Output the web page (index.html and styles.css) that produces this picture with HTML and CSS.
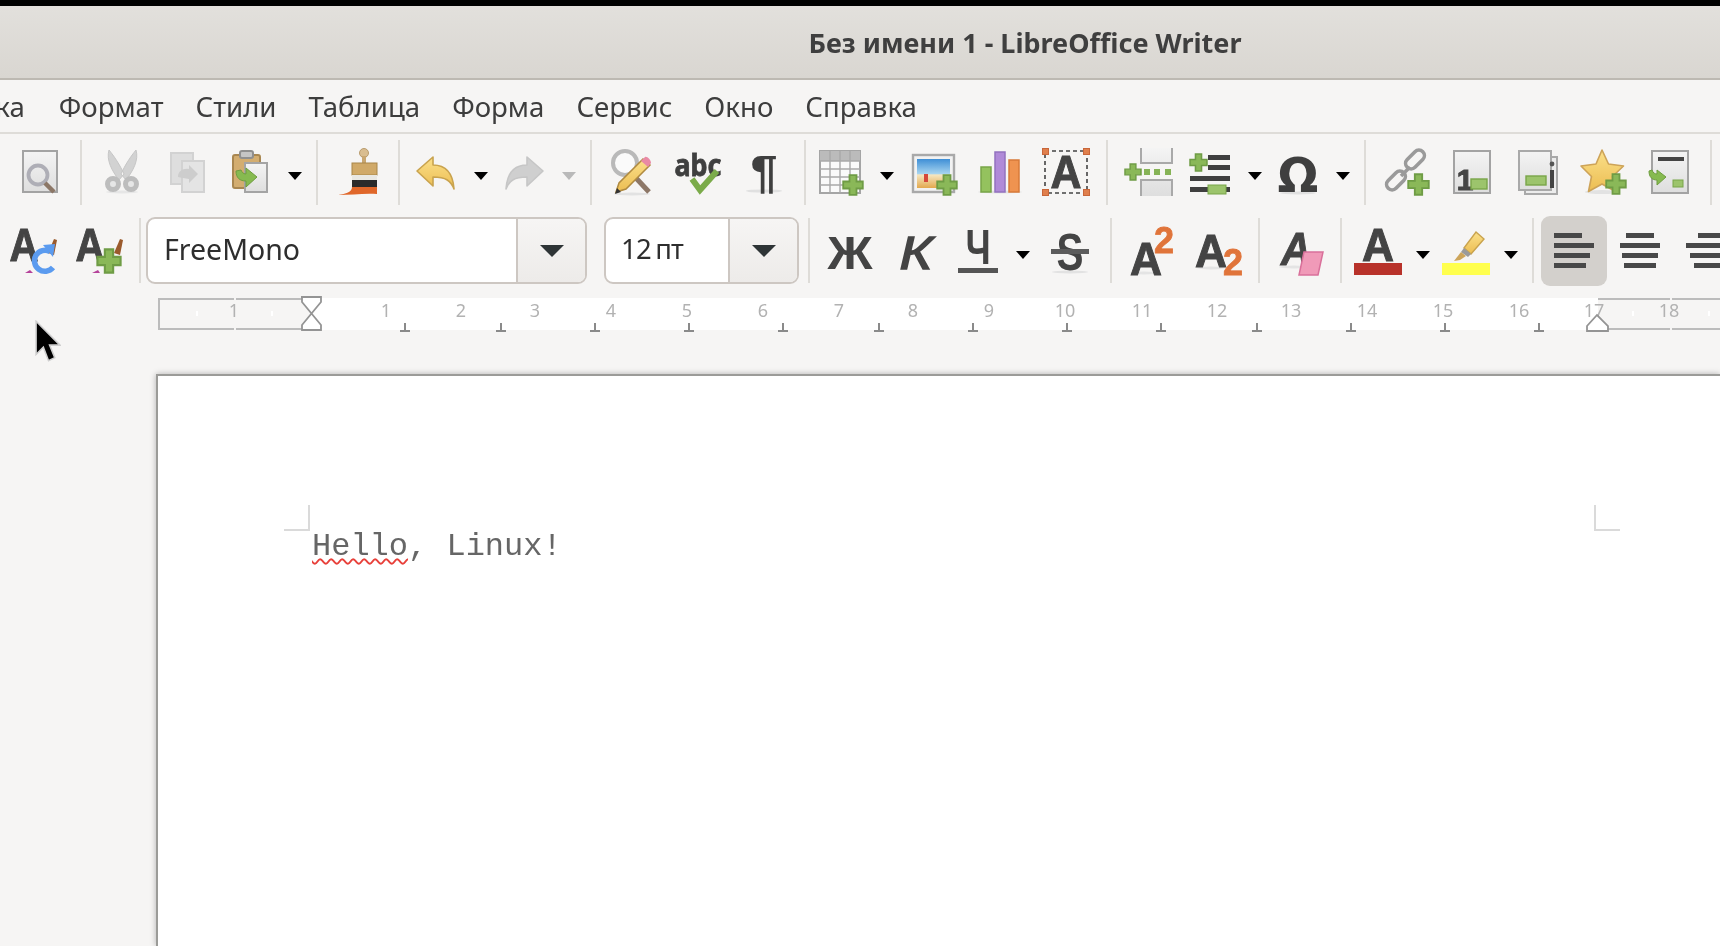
FILE: index.html
```html
<!DOCTYPE html>
<html lang="ru">
<head>
<meta charset="utf-8">
<title>Без имени 1 - LibreOffice Writer</title>
<link rel="stylesheet" href="styles.css">
</head>
<body>
<svg class="defs" width="0" height="0" aria-hidden="true">
  <defs>
    <linearGradient id="pg" x1="0" y1="0" x2="0" y2="1"><stop offset="0" stop-color="#f4f4f4"/><stop offset="1" stop-color="#dedede"/></linearGradient>
    <linearGradient id="yl" x1="0" y1="0" x2="0" y2="1"><stop offset="0" stop-color="#fbe08a"/><stop offset="1" stop-color="#ecbd52"/></linearGradient>
    <linearGradient id="sky" x1="0" y1="0" x2="0" y2="1"><stop offset="0" stop-color="#3f8fd6"/><stop offset=".5" stop-color="#a5d3ef"/><stop offset=".55" stop-color="#f5e6c0"/><stop offset="1" stop-color="#e3a94e"/></linearGradient>
    <symbol id="plus" viewBox="0 0 22 22"><path d="M7.5 1.2h7v6.3h6.3v7h-6.3v6.3h-7v-6.3H1.2v-7h6.3z" fill="#8ab858" stroke="#6f9c45" stroke-width="1.8"/></symbol>
  </defs>
</svg>
<div class="app">
  <div class="topline"></div>
  <header class="titlebar">Без имени 1 - LibreOffice Writer</header>
  <nav class="menubar">
    <span class="mi first">Вставка</span><span class="mi">Формат</span><span class="mi">Стили</span><span class="mi">Таблица</span><span class="mi">Форма</span><span class="mi">Сервис</span><span class="mi">Окно</span><span class="mi">Справка</span>
  </nav>

  <div class="toolbar row1">
    <div class="btn"><svg class="ic" viewBox="0 0 48 48"><rect x="7" y="3" width="34" height="41" fill="url(#pg)" stroke="#a3a3a3" stroke-width="2"/><circle cx="22" cy="27" r="9.500" fill="none" stroke="#aeaeb6" stroke-width="3.800"/><path d="M29 35l9 9" stroke="#8c7767" stroke-width="4.500"/></svg></div>
    <div class="sep"></div>
    <div class="btn"><svg class="ic" viewBox="0 0 48 48"><ellipse cx="24" cy="44" rx="16" ry="1.500" fill="#e6e6e6"/><path d="M11 2c-3 10 3 21 10 30l5-6C22 17 16 8 11 2zM38 2c3 10-3 21-10 30l-5-6c4-9 10-18 15-24z" fill="#d2d2d2" stroke="#c6c6c6"/><circle cx="15" cy="36" r="5.500" fill="#e6e6e6" stroke="#bdbdbd" stroke-width="5"/><circle cx="33" cy="36" r="5.500" fill="#e6e6e6" stroke="#bdbdbd" stroke-width="5"/></svg></div>
    <div class="btn"><svg class="ic" viewBox="0 0 48 48"><rect x="7" y="5" width="22" height="31" fill="#dedede" stroke="#d2d2d2" stroke-width="2"/><rect x="18" y="13" width="22" height="31" fill="#e4e4e4" stroke="#d2d2d2" stroke-width="2"/><path d="M14 29c0-6 5-9 11-8v-4l9 9-9 9v-4c-4-1-8-1-11-2z" fill="#cdcdcd"/></svg></div>
    <div class="btn has"><svg class="ic" viewBox="0 0 48 48"><rect x="7" y="7" width="27" height="33" rx="2" fill="#d3ad70" stroke="#a98751" stroke-width="2"/><rect x="14" y="3" width="13" height="7" rx="2" fill="#c5c5c5" stroke="#8f8f8f" stroke-width="2"/><rect x="19" y="15" width="22" height="29" fill="url(#pg)" stroke="#a4a4a4" stroke-width="2"/><path d="M10 23c0 7 4 10 10 10v6l11-10-11-9v6c-3 0-4-2-5-4z" fill="#86ba50" stroke="#6e9d3f"/></svg></div>
    <div class="arr"></div>
    <div class="sep"></div>
    <div class="btn"><svg class="ic" viewBox="0 0 48 48"><circle cx="30" cy="5" r="4.500" fill="#d9bd90" stroke="#b99c6e"/><rect x="28" y="8" width="4" height="8" fill="#c9a772"/><rect x="18" y="15" width="25" height="12" fill="#d0a968" stroke="#a88648"/><rect x="18" y="27" width="25" height="5" fill="#e9e8e3"/><rect x="18" y="32" width="25" height="8" fill="#2b2b2b"/><path d="M4 47c8-1 14-3 14-8h25v7c-12-1-26 1-39 1z" fill="#e0672a"/></svg></div>
    <div class="sep"></div>
    <div class="btn has"><svg class="ic" viewBox="0 0 48 48"><path d="M5 23L21 9v8c14 0 20 10 21 24-3-8-8-12-21-12v9z" fill="url(#yl)" stroke="#c9a34e" stroke-width="1.600" stroke-linejoin="round"/></svg></div>
    <div class="arr"></div>
    <div class="btn has"><svg class="ic" viewBox="0 0 48 48"><path d="M43 23L27 9v8C13 17 7 27 6 41c3-8 8-12 21-12v9z" fill="#cfcfcf" stroke="#c6c6c6" stroke-width="1.600" stroke-linejoin="round"/></svg></div>
    <div class="arr off"></div>
    <div class="sep"></div>
    <div class="btn"><svg class="ic" viewBox="0 0 48 48"><ellipse cx="24" cy="46" rx="18" ry="1.400" fill="#e2e2e2"/><circle cx="17" cy="15" r="12" fill="#fafafa" stroke="#b9b9b9" stroke-width="4"/><path d="M28 30l13 14" stroke="#8d7767" stroke-width="5"/><path d="M8 44l3-9 24-24 7 6-24 24z" fill="url(#yl)" stroke="#b08a40" stroke-width="1.500"/><path d="M33 13l4-4c2-1 6 3 6 6l-3 4z" fill="#e98aa5"/><path d="M7 46l2-6 4 4z" fill="#333"/></svg></div>
    <div class="btn"><svg class="ic" viewBox="0 0 48 48"><text x="24" y="28" class="t-abc" text-anchor="middle" textLength="47" lengthAdjust="spacingAndGlyphs">abc</text><path d="M18 31l8 11 17-19" fill="none" stroke="#7bab4a" stroke-width="6"/></svg></div>
    <div class="btn"><svg class="ic" viewBox="0 0 48 48"><ellipse cx="24" cy="43" rx="18" ry="1.600" fill="#e0e0e0"/><text x="24" y="40" class="t-pil" text-anchor="middle" textLength="27" lengthAdjust="spacingAndGlyphs">¶</text></svg></div>
    <div class="sep"></div>
    <div class="btn has"><svg class="ic" viewBox="0 0 48 48"><rect x="2" y="3" width="40" height="42" fill="#fafafa" stroke="#a5a5a5" stroke-width="2"/><rect x="2" y="3" width="40" height="10" fill="#bbb"/><path d="M12 3v42M22 3v42M32 3v42M2 13h40M2 21h40M2 29h40M2 37h40" stroke="#a9a9a9" stroke-width="1.400"/><use href="#plus" x="24" y="26" width="22" height="22"/></svg></div>
    <div class="arr"></div>
    <div class="btn"><svg class="ic" viewBox="0 0 48 48"><rect x="3" y="7" width="41" height="37" fill="#f2f2f2" stroke="#a9a9a9" stroke-width="2.400"/><rect x="7" y="11" width="33" height="29" fill="url(#sky)"/><rect x="14" y="26" width="4" height="8" fill="#d5483a"/><use href="#plus" x="26" y="26" width="22" height="22"/></svg></div>
    <div class="btn"><svg class="ic" viewBox="0 0 48 48"><ellipse cx="24" cy="44" rx="22" ry="1.500" fill="#e2e2e2"/><rect x="5" y="19" width="10" height="25" fill="#94c25e" stroke="#78a548" stroke-width="1.500"/><rect x="19" y="4" width="10" height="40" fill="#b08ad8" stroke="#9372bf" stroke-width="1.500"/><rect x="33" y="12" width="10" height="32" fill="#ef9350" stroke="#d87a38" stroke-width="1.500"/></svg></div>
    <div class="btn"><svg class="ic" viewBox="0 0 48 48"><rect x="3" y="3" width="42" height="42" fill="none" stroke="#444" stroke-width="1.600" stroke-dasharray="4 3"/><g fill="#e07f4c" stroke="#c8663a"><rect x="0.500" y="0.500" width="6" height="6"/><rect x="41.500" y="0.500" width="6" height="6"/><rect x="0.500" y="41.500" width="6" height="6"/><rect x="41.500" y="41.500" width="6" height="6"/></g><text x="24" y="40" class="t-a" text-anchor="middle" textLength="31" lengthAdjust="spacingAndGlyphs">A</text></svg></div>
    <div class="sep"></div>
    <div class="btn"><svg class="ic" viewBox="0 0 48 48"><path d="M17 0v15h31V0M17 48V32h31v16" fill="url(#pg)" stroke="#a9a9a9" stroke-width="2"/><path d="M20 24h6M30 24h6M41 24h6" stroke="#86b356" stroke-width="6"/><use href="#plus" x="0" y="15" width="18" height="18"/></svg></div>
    <div class="btn has"><svg class="ic" viewBox="0 0 48 48"><use href="#plus" x="3" y="5" width="19" height="19"/><g fill="#3f3f3f"><rect x="22" y="7" width="22" height="5"/><rect x="22" y="17" width="22" height="5"/><rect x="4" y="28" width="40" height="5"/><rect x="4" y="39" width="40" height="5"/></g><rect x="22" y="37" width="18" height="9" fill="#9cc46c" stroke="#79a549"/></svg></div>
    <div class="arr"></div>
    <div class="btn has"><svg class="ic" viewBox="0 0 48 48"><ellipse cx="24" cy="45" rx="18" ry="1.500" fill="#e0e0e0"/><text x="24" y="44" class="t-om" text-anchor="middle">Ω</text></svg></div>
    <div class="arr"></div>
    <div class="sep"></div>
    <div class="btn"><svg class="ic" viewBox="0 0 48 48"><g fill="none" stroke="#9a9a9a" stroke-width="3.600"><rect x="22" y="6" width="22" height="11" rx="5.500" transform="rotate(-45 33 11.500)"/><rect x="3" y="27" width="22" height="11" rx="5.500" transform="rotate(-45 14 32.500)"/><path d="M19 28l9-9"/></g><use href="#plus" x="25" y="25" width="23" height="23"/></svg></div>
    <div class="btn"><svg class="ic" viewBox="0 0 48 48"><rect x="6" y="3" width="36" height="42" fill="url(#pg)" stroke="#a3a3a3" stroke-width="2"/><text x="17" y="42" class="t-one" text-anchor="middle">1</text><rect x="23" y="31" width="16" height="10" fill="#9cc46c" stroke="#79a549" stroke-width="1.400"/></svg></div>
    <div class="btn"><svg class="ic" viewBox="0 0 48 48"><rect x="11" y="9" width="32" height="37" fill="#ececec" stroke="#a9a9a9" stroke-width="2"/><rect x="5" y="3" width="32" height="39" fill="url(#pg)" stroke="#a9a9a9" stroke-width="2"/><rect x="12" y="28" width="20" height="9" fill="#9cc46c" stroke="#79a549" stroke-width="1.400"/><rect x="36" y="22" width="4" height="18" fill="#444"/><circle cx="38" cy="16" r="2.400" fill="#555"/></svg></div>
    <div class="btn"><svg class="ic" viewBox="0 0 48 48"><ellipse cx="22" cy="44" rx="17" ry="2" fill="#e2e2e2"/><path d="M22 2l6.500 14 15 2-11 10.500 3 15L22 36 8.500 43.500l3-15L1 18l15-2z" fill="url(#yl)" stroke="#cda358" stroke-width="1.600" stroke-linejoin="round"/><use href="#plus" x="25" y="25" width="22" height="22"/></svg></div>
    <div class="btn"><svg class="ic" viewBox="0 0 48 48"><rect x="6" y="3" width="36" height="42" fill="url(#pg)" stroke="#a3a3a3" stroke-width="2"/><rect x="12" y="9" width="26" height="4" fill="#444"/><path d="M3 23c0 6 3 9 8 9v5l9-8-9-7v4c-2 0-4-1-5-4z" fill="#86ba50" stroke="#6e9d3f"/><rect x="27" y="32" width="10" height="7" fill="#9cc46c" stroke="#79a549"/></svg></div>
    <div class="sep"></div>
  </div>

  <div class="toolbar row2">
    <div class="btn"><svg class="ic" viewBox="0 0 48 48"><text x="15" y="34" class="t-bigA" text-anchor="middle" textLength="29" lengthAdjust="spacingAndGlyphs">A</text><path d="M39 26l6-14 3 1-3 15z" fill="#9a5a2c"/><path d="M16 46l5-3 3 3z" fill="#b5429a"/><path d="M41 24.500a10.500 10.500 0 1 0 3 16" fill="none" stroke="#5b9bef" stroke-width="5.500"/><path d="M34 18l12-1-2 13z" fill="#5b9bef"/></svg></div>
    <div class="btn"><svg class="ic" viewBox="0 0 48 48"><text x="15" y="34" class="t-bigA" text-anchor="middle" textLength="29" lengthAdjust="spacingAndGlyphs">A</text><path d="M39 26l6-14 3 1-3 15z" fill="#9a5a2c"/><path d="M17 46l6-3 2 3z" fill="#b5429a"/><use href="#plus" x="21" y="21" width="26" height="26"/></svg></div>
    <div class="sep"></div>
    <div class="combo font"><span class="combo-text">FreeMono</span><span class="combo-drop"><i class="caret"></i></span></div>
    <div class="combo size"><span class="combo-text tight">12 пт</span><span class="combo-drop"><i class="caret"></i></span></div>
    <div class="sep"></div>
    <div class="btn"><svg class="ic" viewBox="0 0 48 48"><text x="24" y="42" class="t-fmt bold" text-anchor="middle" textLength="45" lengthAdjust="spacingAndGlyphs">Ж</text></svg></div>
    <div class="btn"><svg class="ic" viewBox="0 0 48 48"><text x="24" y="42" class="t-fmt ital" text-anchor="middle" textLength="33" lengthAdjust="spacingAndGlyphs">К</text></svg></div>
    <div class="btn has"><svg class="ic" viewBox="0 0 48 48"><text x="24" y="36" class="t-fmt ch" text-anchor="middle" textLength="25" lengthAdjust="spacingAndGlyphs">Ч</text><rect x="4" y="41" width="40" height="5" fill="#555"/></svg></div>
    <div class="arr"></div>
    <div class="btn"><svg class="ic" viewBox="0 0 48 48"><ellipse cx="24" cy="45" rx="18" ry="1.400" fill="#e2e2e2"/><text x="24" y="43" class="t-fmt bold big" text-anchor="middle" textLength="27" lengthAdjust="spacingAndGlyphs">S</text><rect x="5" y="22" width="38" height="5" fill="#5c5c5c"/></svg></div>
    <div class="sep"></div>
    <div class="btn"><svg class="ic" viewBox="0 0 48 48"><ellipse cx="16" cy="46" rx="14" ry="1.500" fill="#e4e4e4"/><text x="18" y="48" class="t-bigA" text-anchor="middle" textLength="32" lengthAdjust="spacingAndGlyphs">A</text><text x="36" y="26" class="t-sup" text-anchor="middle">2</text></svg></div>
    <div class="btn"><svg class="ic" viewBox="0 0 48 48"><ellipse cx="17" cy="41" rx="14" ry="1.500" fill="#e4e4e4"/><text x="17" y="40" class="t-bigA" text-anchor="middle" textLength="32" lengthAdjust="spacingAndGlyphs">A</text><text x="39" y="48" class="t-sup" text-anchor="middle">2</text></svg></div>
    <div class="sep"></div>
    <div class="btn"><svg class="ic" viewBox="0 0 48 48"><ellipse cx="18" cy="40" rx="15" ry="1.500" fill="#e4e4e4"/><text x="20" y="38" class="t-bigA ital" text-anchor="middle" textLength="30" lengthAdjust="spacingAndGlyphs">A</text><path d="M28 25h19l-5 23H23z" fill="#f09ab8" stroke="#d9709a" stroke-width="1.500"/></svg></div>
    <div class="sep"></div>
    <div class="btn has"><svg class="ic" viewBox="0 0 48 48"><text x="24" y="34" class="t-bigA" text-anchor="middle" textLength="32" lengthAdjust="spacingAndGlyphs">A</text><rect y="36" width="48" height="12" fill="#b8322a"/></svg></div>
    <div class="arr"></div>
    <div class="btn has"><svg class="ic" viewBox="0 0 48 48"><path d="M22 21L34 5l8 7-13 15z" fill="url(#yl)" stroke="#c9a34e" stroke-width="1.400"/><path d="M22 21l7 6-3 3-7-5z" fill="#9a9a9a"/><path d="M19 25l5 4-6 4-6 1z" fill="#cda55a"/><rect y="36" width="48" height="12" fill="#ffff4d"/></svg></div>
    <div class="arr"></div>
    <div class="sep"></div>
    <div class="btn active"><div class="lines"><i class="l-a"></i><i class="l-b"></i><i class="l-c"></i><i class="l-d"></i></div></div>
    <div class="btn"><div class="lines center"><i class="l-a"></i><i class="l-b"></i><i class="l-c"></i><i class="l-d"></i></div></div>
    <div class="btn"><div class="lines right"><i class="l-a"></i><i class="l-b"></i><i class="l-c"></i><i class="l-d"></i></div></div>
  </div>

  <svg class="ruler" viewBox="0 0 1720 36" width="1720" height="36">
    <rect x="310" y="2" width="1288" height="32" fill="#fff"/>
    <path d="M310 3H159v30h151M1598 3h122M1598 33h122" fill="none" stroke="#bcbcbc" stroke-width="2"/>
    <path d="M235 2v32M1671 2v32" stroke="#f6f5f4" stroke-width="2"/>
    <path d="M197 15v5M272 15v5M1633 15v5M1709 15v5" stroke="#fff" stroke-width="2"/>
    <g class="r-num" text-anchor="middle">
      <text x="234" y="21">1</text><text x="386" y="21">1</text><text x="461" y="21">2</text><text x="535" y="21">3</text><text x="611" y="21">4</text><text x="687" y="21">5</text><text x="763" y="21">6</text><text x="839" y="21">7</text><text x="913" y="21">8</text><text x="989" y="21">9</text><text x="1065" y="21">10</text><text x="1142" y="21">11</text><text x="1217" y="21">12</text><text x="1291" y="21">13</text><text x="1367" y="21">14</text><text x="1443" y="21">15</text><text x="1519" y="21">16</text><text x="1594" y="21">17</text><text x="1669" y="21">18</text>
    </g>
    <path d="M405 27v8M400 35h10M501 27v8M496 35h10M595 27v8M590 35h10M689 27v8M684 35h10M783 27v8M778 35h10M879 27v8M874 35h10M973 27v8M968 35h10M1067 27v8M1062 35h10M1161 27v8M1156 35h10M1257 27v8M1252 35h10M1351 27v8M1346 35h10M1445 27v8M1440 35h10M1539 27v8M1534 35h10" stroke="#8a8a8a" stroke-width="2" fill="none"/>
    <path d="M301 1h20v5l-19 23v5h19v-5L302 6V1z" fill="#fff" stroke="#949494" stroke-width="1.800"/>
    <path d="M1587 35v-5l10-11 11 11v5z" fill="#fff" stroke="#949494" stroke-width="1.800"/>
  </svg>

  <main class="workspace">
    <section class="page">
      <i class="crop tl"></i>
      <i class="crop tr"></i>
      <p class="doc"><span class="typo">Hello</span>, Linux!</p>
    </section>
  </main>

  <svg class="cursor" viewBox="0 0 26 42" width="27" height="44"><path d="M2 1v32l7-7 5 13 6-3-5-12h10z" fill="#000" stroke="#cfcfcf" stroke-width="1.500"/></svg>
</div>
</body>
</html>
```
FILE: styles.css
```css
html, body { margin: 0; padding: 0; height: 100%; overflow: hidden; background: #f6f5f4; }
body { font-family: "Noto Sans", sans-serif; color: #3d3d3d; }
.defs { position: absolute; }
.app { position: relative; display: flex; flex-direction: column; width: 1720px; height: 946px; overflow: hidden; background: #f6f5f4; filter: blur(.6px); }

.topline { height: 6px; flex: none; background: #000; }
.titlebar { flex: none; height: 74px; box-sizing: border-box; border-bottom: 2px solid #bdb9b2; background: linear-gradient(#e2e0dc, #d9d6d1); display: flex; align-items: center; justify-content: center; padding-left: 330px; font-size: 27px; font-weight: 700; color: #3f3f3f; }
.menubar { flex: none; height: 54px; box-sizing: border-box; border-bottom: 2px solid #dedcd8; display: flex; align-items: center; font-size: 27.600px; color: #3d3d3d; white-space: nowrap; }
.mi { padding: 0 16px; }
.mi.first { margin-left: -96px; padding-right: 18px; }

.toolbar { flex: none; display: flex; align-items: center; white-space: nowrap; }
.row1 { height: 76px; padding: 0 0 0 7px; box-sizing: border-box; }
.row2 { height: 80px; padding-top: 1px; box-sizing: border-box; }
.btn { flex: none; width: 66px; height: 70px; display: flex; align-items: center; justify-content: center; }
.btn.has { width: 58px; }
.btn.active { background: #d3d0cc; border-radius: 9px; }
.ic { width: 48px; height: 48px; display: block; flex: none; overflow: visible; }
.arr { flex: none; width: 30px; height: 8px; box-sizing: border-box; padding: 0 0 0 2px; margin-top: 8px; display: flex; justify-content: center; }
.arr::before { content: ""; width: 0; height: 0; border-left: 7px solid transparent; border-right: 7px solid transparent; border-top: 8px solid #000; }
.arr.off::before { border-top-color: #b9b9b9; }
.sep { flex: none; width: 2px; height: 65px; margin: 0 7px; background: #dedcd8; }

.combo { flex: none; height: 67px; box-sizing: border-box; display: flex; border: 2px solid #cdc7c2; border-radius: 9px; background: #fff; color: #2e2e2e; }
.combo.font { width: 441px; margin-left: -2px; font-size: 28.500px; }
.combo.size { width: 195px; margin-left: 17px; margin-right: 2px; font-size: 27.500px; }
.combo-text { flex: 1; display: flex; align-items: center; padding: 0 0 4px 16px; min-width: 0; }
.combo-text.tight { letter-spacing: -.8px; word-spacing: -2px; padding-left: 15px; }
.combo-drop { flex: none; width: 69px; box-sizing: border-box; border-left: 2px solid #cdc7c2; border-radius: 0 7px 7px 0; background: linear-gradient(#f6f5f4, #edebe9); display: flex; align-items: center; justify-content: center; }
.caret { width: 0; height: 0; border-left: 12px solid transparent; border-right: 12px solid transparent; border-top: 12px solid #2e3436; }

.t-abc { font: 700 30px "Noto Sans", sans-serif; fill: #3f3f3f; stroke: #3f3f3f; stroke-width: .8px; }
.t-pil { font: 700 46px "Liberation Sans", sans-serif; fill: #3f3f3f; }
.t-a { font: 700 46px "Liberation Sans", sans-serif; fill: #444; stroke: #444; stroke-width: 1px; }
.t-om { font: 700 48px "DejaVu Sans", sans-serif; fill: #3f3f3f; }
.t-one { font: 700 30px "Liberation Sans", sans-serif; fill: #444; stroke: #444; stroke-width: 1px; }
.t-bigA { font: 700 46px "Liberation Sans", sans-serif; fill: #444; stroke: #444; stroke-width: 1px; }
.t-bigA.ital { font-style: italic; }
.t-fmt { font: 400 46px "Liberation Sans", sans-serif; fill: #444; }
.t-fmt.ch { stroke: #444; stroke-width: 2px; }
.t-fmt.bold { font-weight: 700; }
.t-fmt.big { font-size: 52px; }
.t-fmt.ital { font-weight: 400; font-style: italic; stroke: #444; stroke-width: 1.400px; }
.t-sup { font: 700 36px "Liberation Sans", sans-serif; fill: #e0743a; stroke: #e0743a; stroke-width: .8px; }

.lines { display: flex; flex-direction: column; align-items: flex-start; gap: 5px; width: 40px; }
.lines.center { align-items: center; }
.lines.right { align-items: flex-end; }
.lines i { display: block; height: 5px; background: #484848; }
.l-a { width: 28px; }
.l-b { width: 40px; }
.l-c { width: 36px; }
.l-d { width: 32px; }

.ruler { flex: none; display: block; margin-top: 6px; overflow: visible; }
.r-num text { font: 400 18px "Noto Sans", sans-serif; fill: #b2b2b2; }

.workspace { flex: 1; min-height: 0; padding: 42px 0 0 156px; display: flex; }
.page { position: relative; flex: 1; background: #fff; border-top: 2px solid #9b9b98; border-left: 2px solid #9b9b98; box-shadow: 0 0 6px rgba(0,0,0,.28); padding: 153px 0 0 154px; }
.crop { position: absolute; width: 26px; height: 26px; top: 129px; box-sizing: border-box; }
.crop.tl { left: 126px; border-right: 2px solid #dadada; border-bottom: 2px solid #dadada; }
.crop.tr { left: 1436px; border-left: 2px solid #dadada; border-bottom: 2px solid #dadada; }
.doc { margin: 0; font: 400 32px/36px "Liberation Mono", monospace; color: #666; white-space: pre; }
.typo { text-decoration: underline wavy #e8403a 2px; text-underline-offset: 3px; }

.cursor { position: absolute; left: 34px; top: 320px; }
```
